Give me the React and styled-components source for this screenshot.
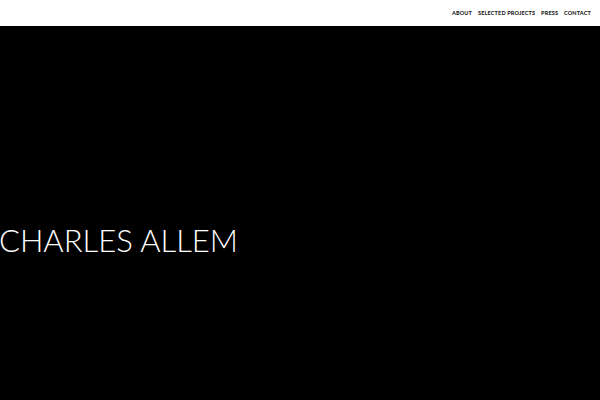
import React from 'react';
import styled, { createGlobalStyle } from 'styled-components';

const GlobalStyle = createGlobalStyle`
  html, body {
    margin: 0;
    padding: 0;
    background: #000;
  }
  * { box-sizing: border-box; }
`;

const Page = styled.div`
  width: 600px;
  height: 400px;
  display: flex;
  flex-direction: column;
  overflow: hidden;
`;

const Header = styled.header`
  height: 26px;
  background: #fff;
  display: flex;
  justify-content: flex-end;
  align-items: center;
  padding-right: 9px;
  flex-shrink: 0;
`;

const Nav = styled.nav`
  display: flex;
  gap: 6px;
`;

const NavLink = styled.a`
  font-family: Lato, "Liberation Sans", sans-serif;
  font-weight: 900;
  font-size: 5.5px;
  letter-spacing: 0.15px;
  color: #222;
  text-decoration: none;
  text-transform: uppercase;
`;

const Hero = styled.main`
  flex: 1;
  background: #000;
  display: flex;
  align-items: center;
`;

const Name = styled.h1`
  margin: 54px 0 0 -1px;
  font-family: Lato, "Liberation Sans", sans-serif;
  font-weight: 300;
  font-size: 31px;
  letter-spacing: 0;
  color: #fff;
  line-height: 1;
`;

export default function App() {
  return (
    <Page>
      <GlobalStyle />
      <Header>
        <Nav>
          <NavLink>About</NavLink>
          <NavLink>Selected Projects</NavLink>
          <NavLink>Press</NavLink>
          <NavLink>Contact</NavLink>
        </Nav>
      </Header>
      <Hero>
        <Name>CHARLES ALLEM</Name>
      </Hero>
    </Page>
  );
}
